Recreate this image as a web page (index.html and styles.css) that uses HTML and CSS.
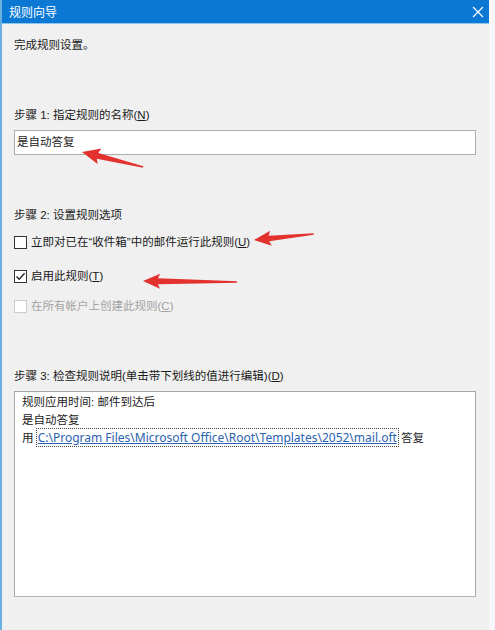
FILE: index.html
```html
<!DOCTYPE html>
<html lang="zh-CN">
<head>
    <meta charset="UTF-8">
    <meta name="viewport" content="width=device-width, initial-scale=1.0">
    <title>规则向导</title>
    <link rel="stylesheet" href="styles.css">
</head>
<body>

    <div class="window">
        <!-- title bar -->
        <div class="titlebar">
            <span class="title">规则向导</span>
            <span class="close">
                <svg width="12" height="12" viewBox="0 0 12 12">
                    <path d="M1 1 L11 11 M11 1 L1 11" stroke="#fff" stroke-width="1.2" fill="none"/>
                </svg>
            </span>
        </div>

        <div class="content">
            <p class="intro">完成规则设置。</p>

            <section class="step step-name">
                <div class="step-label">步骤 1: 指定规则的名称(<u>N</u>)</div>
                <div class="textbox">是自动答复</div>
            </section>

            <section class="step step-options">
                <div class="step-label">步骤 2: 设置规则选项</div>
                <label class="check check-first">
                    <span class="box"></span>
                    <span>立即对已在“收件箱”中的邮件运行此规则(<u>U</u>)</span>
                </label>
                <label class="check check-second">
                    <span class="box checked">
                        <svg width="11" height="11" viewBox="0 0 11 11">
                            <path d="M1.5 5.5 L4.2 8.3 L9.6 2.2" stroke="#222" stroke-width="1.3" fill="none"/>
                        </svg>
                    </span>
                    <span>启用此规则(<u>T</u>)</span>
                </label>
                <label class="check check-third disabled">
                    <span class="box"></span>
                    <span>在所有帐户上创建此规则(<u>C</u>)</span>
                </label>
            </section>

            <section class="step step-desc">
                <div class="step-label">步骤 3: 检查规则说明(单击带下划线的值进行编辑)(<u>D</u>)</div>
                <div class="desc">
                    <div>规则应用时间: 邮件到达后</div>
                    <div>是自动答复</div>
                    <div>用 <a class="link" href="#">C:\Program Files\Microsoft Office\Root\Templates\2052\mail.oft</a> 答复</div>
                </div>
            </section>
        </div>

        <!-- red annotation arrows drawn over the dialog -->
        <svg class="annotations" width="495" height="630" viewBox="0 0 495 630">
            <g fill="#e3322e">
                <polygon transform="translate(82 152) rotate(13.8)" points="0,0 18,-8 16,-3 63,-0.7 63,0.7 16,3 18,8"/>
                <polygon transform="translate(254 240) rotate(-5.8)" points="0,0 17,-7.5 15,-2.8 60,-0.7 60,0.7 15,2.8 17,7.5"/>
                <polygon transform="translate(143 281) rotate(0.6)" points="0,0 17,-7.5 15,-3 94,-0.7 94,0.7 15,3 17,7.5"/>
            </g>
        </svg>
    </div>

</body>
</html>
```

FILE: styles.css
```css
body {
    margin: 0;
    background-color: #f0f0f0;
    font-family: "Liberation Sans", "Noto Sans CJK SC", sans-serif;
    font-size: 11.5px;
    color: #1a1a1a;
}

.window {
    position: relative;
    width: 495px;
    height: 630px;
    box-sizing: border-box;
    border-left: 2px solid #6ab0de;
    border-right: 6px solid #f6f6fb;
    background-color: #f0f0f0;
    overflow: hidden;
}

.titlebar {
    display: flex;
    align-items: center;
    justify-content: space-between;
    height: 23px;
    padding: 0 0 0 7px;
    background-color: #0b78d4;
    border-bottom: 1px solid #8cc6ee;
    color: #fff;
}

.title {
    font-size: 12px;
}

.close {
    display: flex;
    align-items: center;
    justify-content: center;
    width: 30px;
    height: 23px;
    margin-right: -4px;
}

.content {
    padding: 13px 13px 0 12px;
    line-height: 17px;
}

.intro {
    margin: 0;
}

.step-label {
    line-height: 17px;
}

.step-name {
    margin-top: 53px;
}

.textbox {
    height: 23px;
    margin-top: 6px;
    padding: 0 2px;
    line-height: 23px;
    background-color: #fff;
    border: 1px solid #adadad;
}

.step-options {
    margin-top: 52px;
}

.check {
    display: flex;
    align-items: center;
    gap: 4px;
    height: 20px;
}

.check-first {
    margin-top: 8px;
}

.check-second {
    margin-top: 14px;
}

.check-third {
    margin-top: 10px;
}

.box {
    display: flex;
    align-items: center;
    justify-content: center;
    width: 11px;
    height: 11px;
    background-color: #fff;
    border: 1px solid #333;
}

.disabled {
    color: #a3a3a3;
}

.disabled .box {
    border-color: #cccccc;
}

.step-desc {
    margin-top: 52px;
}

.desc {
    height: 202px;
    margin-top: 6px;
    padding: 2px 7px 0;
    line-height: 17.5px;
    background-color: #fff;
    border: 1px solid #a8a8a8;
    border-bottom-color: #b5b5b5;
}

.link {
    font-family: "Noto Sans", "Liberation Sans", sans-serif;
    font-size: 12px;
    color: #2a62b0;
    text-decoration: underline;
    outline: 1px dotted #444;
    outline-offset: 0;
    padding: 0 1px;
}

.annotations {
    position: absolute;
    top: 0;
    left: -2px;
    pointer-events: none;
}
```
